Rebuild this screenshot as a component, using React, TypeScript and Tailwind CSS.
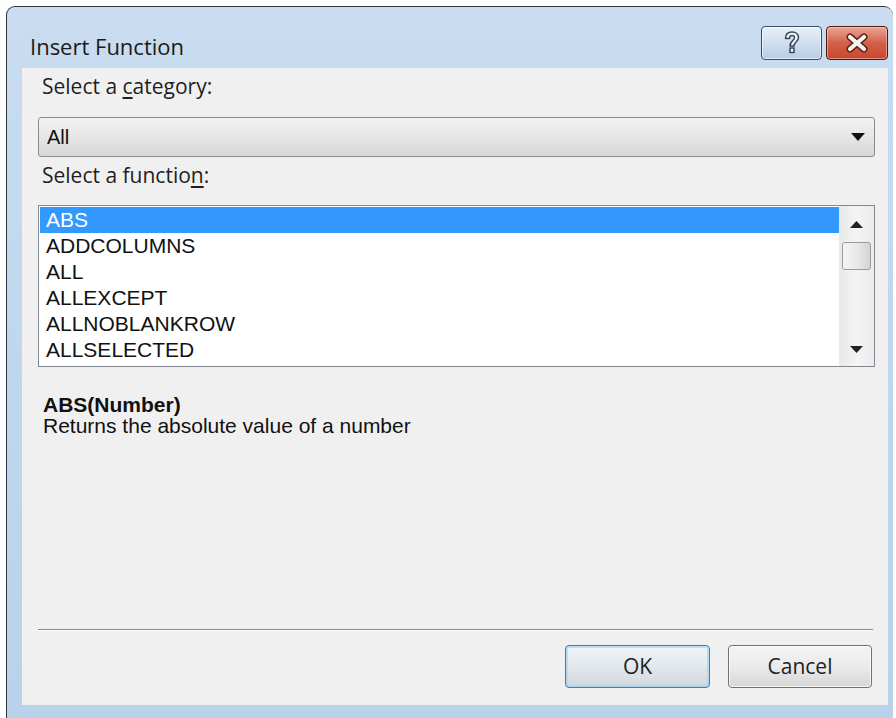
import type { ReactNode } from "react";

const functions = [
  "ABS",
  "ADDCOLUMNS",
  "ALL",
  "ALLEXCEPT",
  "ALLNOBLANKROW",
  "ALLSELECTED",
];

const uiFont = { fontFamily: '"Open Sans", "Noto Sans", sans-serif' };
const listFont = { fontFamily: '"Liberation Sans", Arial, sans-serif' };

function CaptionButton({ kind }: { kind: "help" | "close" }) {
  if (kind === "help") {
    return (
      <div className="w-[61px] h-[34px] rounded-[4px] border border-[#3a4d66] bg-gradient-to-b from-[#e8f0f9] via-[#cfdff0] to-[#b6cde6] flex items-center justify-center shadow-[inset_0_0_0_1px_rgba(255,255,255,0.6)]">
        <svg width="20" height="26" viewBox="0 0 20 26">
          <path
            d="M3.5 8.5 C3.5 4 6.5 2 10 2 C14 2 16.5 4.5 16.5 7.5 C16.5 11.5 12 12 12 16 L8 16 C8 10.5 12.5 10.5 12.5 7.8 C12.5 6.4 11.5 5.6 10 5.6 C8.3 5.6 7.5 6.7 7.5 8.5 Z M8 18 L12 18 L12 22.5 L8 22.5 Z"
            fill="#f6f8fb"
            stroke="#34475c"
            strokeWidth="1.5"
            strokeLinejoin="round"
          />
        </svg>
      </div>
    );
  }
  return (
    <div className="w-[62px] h-[34px] rounded-[4px] border border-[#4a1a12] bg-gradient-to-b from-[#eaa697] via-[#d3604a] to-[#c9452c] flex items-center justify-center shadow-[inset_0_0_0_1px_rgba(255,220,210,0.5)]">
      <svg width="26" height="20" viewBox="0 0 26 20">
        <path d="M6 4 L20 16 M20 4 L6 16" stroke="#5a2418" strokeWidth="7" strokeLinecap="round" />
        <path d="M6 4 L20 16 M20 4 L6 16" stroke="#f7f3f1" strokeWidth="4.2" strokeLinecap="round" />
      </svg>
    </div>
  );
}

function Label({ children }: { children: ReactNode }) {
  return (
    <div className="pl-[20px] pt-[4px] text-[21px] leading-[28px] text-[#1e1e1e]" style={uiFont}>
      {children}
    </div>
  );
}

function DialogButton({ label, primary }: { label: string; primary?: boolean }) {
  return (
    <button
      className={
        primary
          ? "w-[145px] h-[43px] rounded-[4px] border border-[#3c7fb1] bg-gradient-to-b from-[#f0f4f7] via-[#e2e8ed] to-[#cfd8df] text-[21px] text-[#1e1e1e] shadow-[inset_0_0_0_2px_rgba(160,215,245,0.7)]"
          : "w-[144px] h-[43px] rounded-[4px] border border-[#707070] bg-gradient-to-b from-[#f4f4f4] via-[#ebebeb] to-[#d6d6d6] text-[21px] text-[#1e1e1e] shadow-[inset_0_0_0_1px_rgba(255,255,255,0.8)]"
      }
      style={uiFont}
    >
      {label}
    </button>
  );
}

export default function App() {
  return (
    <div className="w-[896px] h-[718px] bg-white overflow-hidden pt-[6px] pl-[6px]">
      <div className="w-[887px] h-[720px] rounded-t-[9px] border-t border-l border-[#2c3643] bg-gradient-to-b from-[#c9dcf0] to-[#b9d1ea] flex flex-col">
        {/* title bar */}
        <div className="h-[61px] flex items-start justify-between">
          <div className="pl-[23px] pt-[24px] text-[22px] leading-[30px] text-[#1a1a1a]" style={uiFont}>
            Insert Function
          </div>
          <div className="flex pt-[19px] pr-[5px]">
            <CaptionButton kind="help" />
            <div className="w-[4px]" />
            <CaptionButton kind="close" />
          </div>
        </div>

        {/* client area */}
        <div className="ml-[15px] w-[866px] h-[637px] bg-[#f0f0f0] flex flex-col">
          <div className="h-[49px]">
            <Label>
              Select a <span className="underline underline-offset-[3px]">c</span>ategory:
            </Label>
          </div>

          <div className="mx-[16px] w-[837px] h-[40px] rounded-[3px] border border-[#8b8b8b] bg-gradient-to-b from-[#f3f3f3] via-[#e6e6e6] to-[#d6d6d6] flex items-center justify-between pl-[8px] pr-[9px]">
            <span className="text-[20px] text-[#111]" style={listFont}>
              All
            </span>
            <svg width="14" height="9" viewBox="0 0 14 9">
              <path d="M0 0 L14 0 L7 8 Z" fill="#111" />
            </svg>
          </div>

          <div className="h-[48px]">
            <Label>
              Select a functio<span className="underline underline-offset-[3px]">n</span>:
            </Label>
          </div>

          {/* function list */}
          <div className="mx-[16px] w-[837px] h-[162px] border border-[#828790] bg-white flex">
            <div className="flex-1 pt-[1px] pl-[1px]">
              {functions.map((f, i) => (
                <div
                  key={f}
                  className={
                    i === 0
                      ? "h-[26px] pl-[6px] bg-[#3399ff] text-white text-[21px] leading-[26px]"
                      : "h-[26px] pl-[6px] text-[#111] text-[21px] leading-[26px]"
                  }
                  style={listFont}
                >
                  {f}
                </div>
              ))}
            </div>
            <div className="w-[35px] bg-gradient-to-r from-[#e8e8e8] via-[#f4f4f4] to-[#ececec] flex flex-col items-center">
              <div className="h-[36px] flex items-center">
                <svg width="13" height="7" viewBox="0 0 13 7">
                  <path d="M0 7 L13 7 L6.5 0 Z" fill="#222" />
                </svg>
              </div>
              <div className="w-[29px] h-[28px] rounded-[3px] border border-[#9a9a9a] bg-gradient-to-r from-[#f4f4f4] via-[#e8e8e8] to-[#d4d4d4]" />
              <div className="flex-1" />
              <div className="h-[34px] flex items-center">
                <svg width="13" height="7" viewBox="0 0 13 7">
                  <path d="M0 0 L13 0 L6.5 7 Z" fill="#222" />
                </svg>
              </div>
            </div>
          </div>

          {/* description */}
          <div className="mt-[27px] pl-[21px] text-[21px] leading-[21px] text-[#111]" style={listFont}>
            <div className="font-bold">ABS(Number)</div>
            <div>Returns the absolute value of a number</div>
          </div>

          <div className="flex-1" />

          <div className="mx-[16px] w-[835px] border-t border-b border-t-[#8a8a8a] border-b-white" />

          <div className="mt-[14px] mb-[17px] flex justify-end gap-[18px] pr-[16px]">
            <DialogButton label="OK" primary />
            <DialogButton label="Cancel" />
          </div>
        </div>
      </div>
    </div>
  );
}
